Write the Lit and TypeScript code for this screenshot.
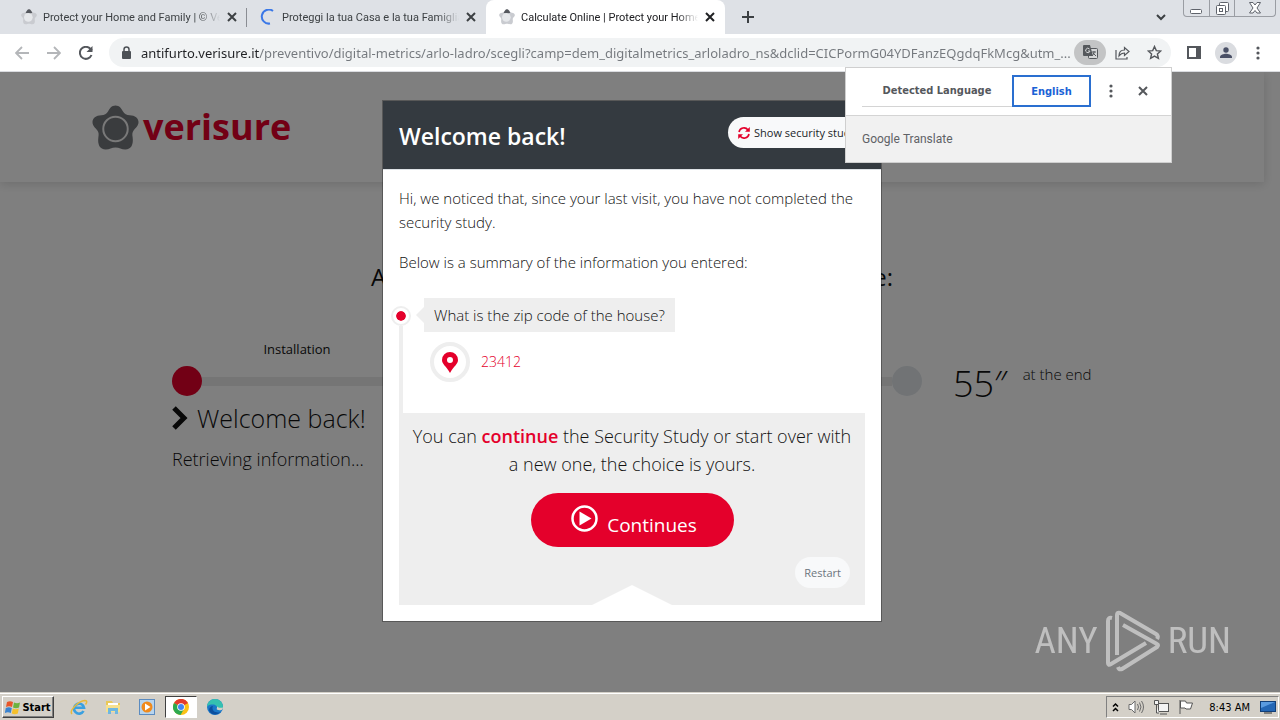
import { LitElement, html, css, svg } from "lit";
import { customElement } from "lit/decorators.js";

const closeIcon = html`<svg width="12" height="12" viewBox="0 0 12 12" fill="none" stroke="currentColor" stroke-width="2"><path d="M2 2l8 8M10 2l-8 8" /></svg>`;
const dotsIcon = html`<svg width="4" height="16" viewBox="0 0 4 16" fill="currentColor"><circle cx="2" cy="3" r="1.6" /><circle cx="2" cy="8" r="1.6" /><circle cx="2" cy="13" r="1.6" /></svg>`;
const starShape = svg`<path d="M24 1c-4 0-6 3-7.500 6-1.500 3-4 4-7 4C4 11 .5 14 .5 18c0 4 3 6 5 8.500 1.500 2 1.500 4 1 7C5.500 41 8 46 14 46c4 0 6-2 10-2s6 2 10 2c6 0 8.500-5 7.500-12.500-.5-3-.5-5 1-7 2-2.500 5-4.500 5-8.500 0-4-3.500-7-9-7-3 0-5.500-1-7-4C30 4 28 1 24 1z" />`;
const favicon = html`<svg width="16" height="16" viewBox="0 0 48 48">
  <g fill="#c9cbd0">${starShape}</g><path d="M14 11c3-4 5-10 10-10s7 6 10 10l-10 3z" fill="#55585e" /><circle cx="22" cy="25" r="13" fill="#e6e8eb" /></svg>`;

@customElement("browser-chrome")
export class BrowserChrome extends LitElement {
  static styles = css`
    :host { display: block; font-family: Roboto, "Liberation Sans", sans-serif; color: #3c4043; }
    svg { display: block; flex: none; }
    button { border: 0; background: none; padding: 0; margin: 0; color: inherit; font: inherit; display: flex; align-items: center; justify-content: center; flex: none; }
    .strip { display: flex; height: 34px; background: #dee1e6; padding-left: 8px; }
    .tab { flex: 0 1 239px; min-width: 0; box-sizing: border-box; display: flex; align-items: center; gap: 6px; padding: 0 9px 0 13px; font-size: 11px; position: relative; }
    .tab.active { background: #fff; border-radius: 8px 8px 0 0; color: #202124; }
    .tab.divided::after { content: ""; position: absolute; right: 0; top: 8px; width: 1px; height: 19px; background: #8a8d93; }
    .title { flex: 1; min-width: 0; white-space: nowrap; overflow: hidden; -webkit-mask-image: linear-gradient(90deg, #000 88%, transparent); mask-image: linear-gradient(90deg, #000 88%, transparent); }
    .close { width: 12px; height: 16px; }
    .plus { width: 46px; color: #3c4043; }
    .fill { flex: 1; }
    .search { width: 44px; }
    .window { display: flex; height: 17px; margin-right: 4px; border: 1px solid #9a9da3; border-top: 0; border-radius: 0 0 4px 4px; box-sizing: border-box; color: #5f636b; }
    .window button { width: 25px; height: 16px; }
    .window button + button { border-left: 1px solid #9a9da3; }
    .window button:last-child { width: 41px; }
    .bar { display: flex; align-items: center; height: 37px; padding: 0 6px; background: #fff; border-bottom: 1px solid #dadce0; }
    .tool { width: 32px; height: 28px; color: #54575c; }
    .tool.off { color: #b4b6b9; }
    .omni { flex: 1; min-width: 0; display: flex; align-items: center; height: 29px; margin: 0 7px; padding: 0 1px 0 9px; border-radius: 15px; background: #f1f3f4; }
    .url { flex: 1; min-width: 0; margin: 0 0 0 7px; padding: 0; border: 0; outline: 0; height: 24px; font: 13px "Noto Sans", "Open Sans", sans-serif; color: #5f6368; background: linear-gradient(90deg, #202124 118px, #74787d 118px); -webkit-background-clip: text; background-clip: text; -webkit-text-fill-color: transparent; }
    .translate { width: 32px; height: 25px; border-radius: 13px; background: #c3c4c5; color: #55585c; }
    .avatar { width: 22px; height: 22px; border-radius: 50%; background: #dadce0; display: flex; align-items: center; justify-content: center; }
  `;
  render() {
    return html`
      <div class="strip">
        <div class="tab divided">${favicon}<span class="title">Protect your Home and Family | © Verisure</span><button class="close" aria-label="Close tab">${closeIcon}</button></div>
        <div class="tab">
          <svg width="16" height="16" viewBox="0 0 16 16" fill="none" stroke="#3b78e7" stroke-width="2"><path d="M13 2A7 7 0 1 0 10 14.500" /></svg>
          <span class="title">Proteggi la tua Casa e la tua Famiglia</span><button class="close" aria-label="Close tab">${closeIcon}</button>
        </div>
        <div class="tab active">${favicon}<span class="title">Calculate Online | Protect your Home</span><button class="close" aria-label="Close tab">${closeIcon}</button></div>
        <button class="plus" aria-label="New tab"><svg width="12" height="12" viewBox="0 0 12 12" stroke="currentColor" stroke-width="2"><path d="M6 0v12M0 6h12" /></svg></button>
        <div class="fill"></div>
        <button class="search" aria-label="Search tabs"><svg width="10" height="7" viewBox="0 0 10 7" fill="none" stroke="currentColor" stroke-width="2"><path d="M1 1l4 4 4-4" /></svg></button>
        <div class="window">
          <button aria-label="Minimize"><svg width="13" height="13" viewBox="0 0 13 13" fill="#fff" stroke="currentColor"><rect x=".5" y="7.500" width="11" height="4" rx="1" /></svg></button>
          <button aria-label="Restore"><svg width="13" height="13" viewBox="0 0 13 13" fill="#fff" stroke="currentColor"><rect x="3.500" y=".5" width="9" height="9" rx="1" /><rect x=".5" y="3.500" width="9" height="9" rx="1" /><rect x="3.500" y="6.500" width="3" height="3" /></svg></button>
          <button aria-label="Close"><svg width="12" height="12" viewBox="0 0 12 12" fill="#fff" stroke="currentColor"><path d="M.5.500h3.500l2 2.500 2-2.500h3.500L8 6l3.500 5H8L6 8.500 4 11H.5L4 6z" /></svg></button>
        </div>
      </div>
      <div class="bar">
        <button class="tool off" aria-label="Back"><svg width="14" height="14" viewBox="0 0 14 14" fill="none" stroke="currentColor" stroke-width="1.800"><path d="M14 7H1.500M7 1L1 7l6 6" /></svg></button>
        <button class="tool off" aria-label="Forward"><svg width="14" height="14" viewBox="0 0 14 14" fill="none" stroke="currentColor" stroke-width="1.800"><path d="M0 7h12.500M7 1l6 6-6 6" /></svg></button>
        <button class="tool" aria-label="Reload"><svg width="14" height="14" viewBox="0 0 14 14" fill="none" stroke="currentColor" stroke-width="2"><path d="M12.500 9A6 6 0 1 1 11.500 3L13 4.500" /><path d="M13.500 0v6H7.500z" fill="currentColor" stroke="none" /></svg></button>
        <div class="omni">
          <svg width="16" height="16" viewBox="0 0 16 16"><rect x="4" y="6" width="9" height="8" rx="1" fill="#4d5156" /><path d="M6 6V4.500a2.500 2.500 0 0 1 5 0V6" fill="none" stroke="#4d5156" stroke-width="1.500" /></svg>
          <input class="url" aria-label="Address" spellcheck="false" .value=${"antifurto.verisure.it/preventivo/digital-metrics/arlo-ladro/scegli?camp=dem_digitalmetrics_arloladro_ns&dclid=CICPormG04YDFanzEQgdqFkMcg&utm_..."} />
          <button class="translate" aria-label="Translate this page"><svg width="15" height="15" viewBox="0 0 15 15"><rect x="5.500" y="3.500" width="9" height="10" rx="1" fill="#d5d6d7" stroke="currentColor" /><path d="M1 0h6l3 11H1a1 1 0 0 1-1-1V1a1 1 0 0 1 1-1z" fill="currentColor" /><path d="M6.500 4A2.200 2.200 0 1 0 7 6H5" fill="none" stroke="#d5d6d7" /><path d="M9 7h4M11 6v1c0 2-1 3-2 4M10 8l3 3" fill="none" stroke="currentColor" /></svg></button>
          <button class="tool" aria-label="Share"><svg width="15" height="14" viewBox="0 0 15 14" fill="none" stroke="currentColor" stroke-width="1.200"><path d="M1 4v9h11v-2" /><path d="M4 10c0-4 2-6 5.500-6V1.500L14 5.500l-4.500 4V7C7 7 5.500 8 4 10z" /></svg></button>
          <button class="tool" aria-label="Bookmark"><svg width="15" height="15" viewBox="0 0 15 15" fill="none" stroke="currentColor" stroke-width="1.400"><path d="M7.500 1.500l1.800 4.100 4.500.4-3.400 3 1 4.400-3.900-2.300-3.900 2.300 1-4.400-3.400-3 4.500-.4z" /></svg></button>
        </div>
        <button class="tool" aria-label="Side panel"><svg width="14" height="13" viewBox="0 0 14 13"><rect x="1" y="1" width="12" height="11" fill="none" stroke="currentColor" stroke-width="2" /><path d="M9 0h5v13H9z" fill="currentColor" /></svg></button>
        <button class="tool" aria-label="Profile"><span class="avatar"><svg width="12" height="12" viewBox="0 0 12 12" fill="#4a5066"><circle cx="6" cy="3" r="2.700" /><path d="M0 11V10c0-2.500 4-3.300 6-3.300s6 .8 6 3.300v1z" /></svg></span></button>
        <button class="tool" aria-label="Menu">${dotsIcon}</button>
      </div>`;
  }
}

@customElement("translate-popup")
export class TranslatePopup extends LitElement {
  static styles = css`
    :host { display: block; box-sizing: border-box; width: 327px; border: 1px solid #cfcfcf; background: #fff; font: 11px "DejaVu Sans Condensed", "DejaVu Sans", sans-serif; }
    button { font: inherit; border: 0; background: none; padding: 0; color: #55585c; display: flex; align-items: center; justify-content: center; }
    .row { display: flex; padding: 7px 12px 8px 16px; border-bottom: 1px solid #d4d4d4; }
    .lang { flex: 1; height: 32px; font-weight: 700; border-bottom: 1px solid #d4d4d4; }
    .lang.on { flex: 0 0 79px; margin-right: 4px; border: 2px solid #2a6fd0; color: #1a62d6; }
    .icon { width: 32px; height: 32px; }
    .brand { background: #f1f1f1; height: 46px; padding: 0 16px; display: flex; align-items: center; gap: 3px; color: #5f6266; font: 12px Roboto, sans-serif; }
  `;
  render() {
    return html`
      <div class="row">
        <button class="lang">Detected Language</button>
        <button class="lang on">English</button>
        <button class="icon" aria-label="Options">${dotsIcon}</button>
        <button class="icon" aria-label="Close">${closeIcon}</button>
      </div>
      <div class="brand"><span>Google</span><span>Translate</span></div>`;
  }
}

@customElement("security-page")
export class SecurityPage extends LitElement {
  static styles = css`
    :host { display: block; background: #fff; padding-right: 16px; color: #111; font: 300 15px/24px "Open Sans", "Noto Sans", sans-serif; overflow: hidden; }
    svg { display: block; flex: none; }
    h1, h2, p { margin: 0; font-weight: 300; }
    .top { display: flex; align-items: center; gap: 4px; height: 110px; padding: 0 92px; box-shadow: 0 2px 10px rgba(0, 0, 0, 0.15); }
    .name { font-size: 36px; line-height: 44px; font-weight: 700; color: #e4002b; }
    .headline { margin: 79px 0 0; text-align: center; font-size: 24px; line-height: 32px; font-weight: 500; white-space: nowrap; }
    .study { display: grid; grid-template-columns: minmax(0, 750px) auto; column-gap: 31px; max-width: 920px; margin: 46px auto 0; }
    .labels { display: grid; grid-template-columns: repeat(3, 1fr); text-align: center; font-size: 13px; line-height: 20px; font-weight: 400; }
    .track { display: flex; align-items: center; margin: 7px 0 4px; }
    .line { flex: 1; height: 9px; background: #ebebeb; }
    .stop { width: 30px; height: 30px; border-radius: 50%; background: #e2e7eb; }
    .stop.on { background: #e4002b; }
    .step { display: flex; align-items: center; gap: 9px; font-size: 25px; line-height: 36px; }
    .state { font-size: 18px; line-height: 28px; margin-top: 9px; }
    .eta { display: flex; gap: 15px; padding-top: 23px; }
    .secs { font-size: 36px; line-height: 44px; }
  `;
  render() {
    return html`
      <header class="top">
        <svg width="47" height="47" viewBox="0 0 48 47"><g fill="#75787c">${starShape}</g><circle cx="24" cy="25" r="12.500" fill="none" stroke="#f2f2f2" stroke-width="2" /></svg>
        <span class="name">verisure</span>
      </header>
      <h2 class="headline">Answer a few questions to get your free quote:</h2>
      <section class="study">
        <div>
          <div class="labels"><span>Installation</span></div>
          <div class="track"><span class="stop on"></span><span class="line"></span><span class="stop"></span></div>
          <h1 class="step"><svg width="16" height="24" viewBox="0 0 16 24" fill="none" stroke="#111" stroke-width="5"><path d="M2 2l10 10L2 22" /></svg>Welcome back!</h1>
          <p class="state">Retrieving information...</p>
        </div>
        <div class="eta"><span class="secs">55″</span><span>at the end</span></div>
      </section>`;
  }
}

@customElement("welcome-modal")
export class WelcomeModal extends LitElement {
  static styles = css`
    :host { display: block; box-sizing: border-box; width: 100%; max-width: 500px; border: 1px solid rgba(0, 0, 0, 0.3); background: #fff; background-clip: padding-box; color: #111; font: 300 15px/24px "Open Sans", "Noto Sans", sans-serif; }
    svg { display: block; flex: none; }
    h2, p { margin: 0; }
    button { border: 0; margin: 0; font-family: inherit; display: flex; align-items: center; justify-content: center; }
    header { display: flex; justify-content: space-between; align-items: flex-start; padding: 16px 16px 0; height: 52px; background: #343a40; color: #fff; border-bottom: 1px solid #dee2e6; }
    h2 { font-size: 23px; line-height: 38px; font-weight: 600; }
    .pill { height: 31px; padding: 0 9px 0 10px; border-radius: 16px; background: #f8f9fa; font-size: 11px; gap: 4px; color: #212529; white-space: nowrap; }
    .body { padding: 16px; }
    p + p { margin-top: 16px; }
    .timeline { position: relative; margin-top: 24px; padding: 0 0 31px 25px; }
    .timeline::before { content: ""; position: absolute; left: 0; top: 28px; bottom: 0; width: 4px; background: #eee; }
    .dot { position: absolute; left: -6px; top: 10px; width: 10px; height: 10px; border-radius: 50%; background: #e4002b; background-clip: padding-box; border: 3px solid #fff; outline: 2px solid #eee; box-shadow: inset 0 0 0 0 #fff; }
    .question { position: relative; width: max-content; margin-bottom: 10px; padding: 5px 10px; background: #eee; }
    .question::before { content: ""; position: absolute; left: -8px; top: 9px; border: 8px solid transparent; border-left: 0; border-right-color: #eee; }
    .answer { display: flex; align-items: center; gap: 11px; margin-left: 6px; color: #e4002b; font-size: 14px; }
    .pin { box-sizing: border-box; width: 40px; height: 40px; border: 4px solid #eee; border-radius: 50%; display: flex; align-items: center; justify-content: center; }
    .choice { position: relative; background: #eee; padding: 9px 10px 17px; }
    .choice::after { content: ""; position: absolute; bottom: 0; left: 50%; margin-left: -40px; border: 40px solid transparent; border-top: 0; border-bottom: 20px solid #fff; }
    .choice p { font-size: 18px; line-height: 28px; text-align: center; }
    .choice strong { font-weight: 600; color: #e4002b; }
    .go { width: 203px; height: 54px; margin: 15px auto 10px; border-radius: 27px; background: #e4002b; color: #fff; font-size: 19px; line-height: 28px; padding: 4px 0 0 4px; }
    .go span { display: flex; align-items: baseline; gap: 9px; }
    .again { height: 31px; margin: 0 5px 0 auto; padding: 0 9px; border-radius: 16px; background: #f8f9fa; color: #6c757d; font-size: 11px; }
  `;
  render() {
    return html`
      <header>
        <h2>Welcome back!</h2>
        <button class="pill"><svg width="12" height="12" viewBox="0 0 12 12" fill="none" stroke="#e4002b" stroke-width="1.600"><path d="M1 5a5 5 0 0 1 9-2M11 7a5 5 0 0 1-9 2" /><path d="M11.800 0v4.800H7zM.2 12V7.200H5z" fill="#e4002b" stroke="none" /></svg>Show security study</button>
      </header>
      <div class="body">
        <p>Hi, we noticed that, since your last visit, you have not completed the security study.</p>
        <p>Below is a summary of the information you entered:</p>
        <div class="timeline">
          <span class="dot"></span>
          <div class="question">What is the zip code of the house?</div>
          <div class="answer"><span class="pin"><svg width="16" height="21" viewBox="0 0 16 21"><path fill-rule="evenodd" d="M8 0a8 8 0 0 0-8 8c0 4 4 6 8 13 4-7 8-9 8-13a8 8 0 0 0-8-8zm0 5a3 3 0 1 1 0 6 3 3 0 0 1 0-6z" fill="#e4002b" /></svg></span>23412</div>
        </div>
        <div class="choice">
          <p>You can <strong>continue</strong> the Security Study or start over with a new one, the choice is yours.</p>
          <button class="go"><span><svg width="27" height="27" viewBox="0 0 27 27"><circle cx="13.500" cy="13.500" r="12" fill="none" stroke="#fff" stroke-width="2.500" /><path d="M8.500 6.500v14l12-7z" fill="#fff" /></svg>Continues</span></button>
          <button class="again">Restart</button>
        </div>
      </div>`;
  }
}

@customElement("task-bar")
export class TaskBar extends LitElement {
  static styles = css`
    :host { display: flex; align-items: center; box-sizing: border-box; height: 28px; padding: 2px 1px 0 2px; background: #d4d0c8; box-shadow: inset 0 1px #d4d0c8, inset 0 2px #fff; font: 11px "DejaVu Sans Condensed", sans-serif; color: #000; }
    svg { display: block; flex: none; }
    button { border: 0; padding: 0; margin: 0; background: none; font: inherit; display: flex; align-items: center; justify-content: center; }
    .start { width: 52px; height: 22px; gap: 1px; font-weight: 700; border: 1px solid; border-color: #fff #404040 #404040 #fff; box-shadow: inset -1px -1px #808080; background: #d4d0c8; }
    .apps { display: flex; gap: 2px; margin-left: 9px; flex: 1; }
    .app { width: 32px; height: 22px; }
    .app.on { background: #fff; box-sizing: border-box; border: 1px solid; border-color: #404040 #fff #fff #404040; }
    .tray { display: flex; align-items: center; box-sizing: border-box; height: 22px; padding: 0 2px 0 5px; gap: 9px; border: 1px solid; border-color: #808080 #fff #fff #808080; }
    time { margin: 0 1px 0 6px; }
  `;
  render() {
    return html`
      <button class="start"><svg width="16" height="15" viewBox="0 0 16 15"><path d="M2 2c2-1 4-1 6 0L7 7C5 6 3 6 1 7z" fill="#e8562a" /><path d="M9 2.500c2 1 4 1 6 0l-1 5c-2 1-4 1-6 0z" fill="#6cb33e" /><path d="M.8 8c2-1 4-1 6 0l-1 5c-2-1-4-1-6 0z" fill="#3a83d0" /><path d="M7.800 8.500c2 1 4 1 6 0l-1 5c-2 1-4 1-6 0z" fill="#f5c02c" /></svg>Start</button>
      <div class="apps">
        <button class="app" aria-label="Internet Explorer"><svg width="18" height="17" viewBox="0 0 18 17" fill="none"><path d="M13.500 12A5 5 0 1 1 14 8.800H5" stroke="#3aa0e0" stroke-width="2.600" /><path d="M2 15C-1 12 8 2 15 1.500c2.500 0 2 2 .5 4" stroke="#e8b93a" stroke-width="1.500" /></svg></button>
        <button class="app" aria-label="Explorer"><svg width="16" height="16" viewBox="0 0 16 16"><path d="M1 2h6l1 2h7v9H1z" fill="#e9c858" /><path d="M3 4h10v4H3z" fill="#fff" /><path d="M1 6h14v7H1z" fill="#f6e08e" /><path d="M3 15V9h10v6h-3v-3H6v3z" fill="#6fb7e0" /></svg></button>
        <button class="app" aria-label="Media Player"><svg width="16" height="16" viewBox="0 0 16 16"><rect x=".5" y=".5" width="15" height="15" fill="#b7d4ee" stroke="#5b8bc0" /><circle cx="8" cy="8" r="5.500" fill="#f08a1c" /><path d="M6 4.500v7L11.500 8z" fill="#fff" /></svg></button>
        <button class="app on" aria-label="Chrome"><svg width="16" height="16" viewBox="0 0 16 16"><circle cx="8" cy="8" r="8" fill="#fbc116" /><path d="M8 8L1 4a8 8 0 0 1 14 0z" fill="#e33b2e" /><path d="M8 8L1 4a8 8 0 0 0 6.500 12l3.500-6z" fill="#2da94f" /><circle cx="8" cy="8" r="3.800" fill="#fff" /><circle cx="8" cy="8" r="3" fill="#4285f4" /></svg></button>
        <button class="app" aria-label="Edge"><svg width="16" height="16" viewBox="0 0 16 16"><circle cx="8" cy="8" r="8" fill="#1b78c8" /><path d="M0 8a8 8 0 0 1 16 0c0 3-4 4-6 2.500C11 8 9 5.500 6 5.500S1 6 0 8z" fill="#35c1b0" /><path d="M6 7c-2 4 2 8 8 6-4 4-11 3-12-2 0-2 2-4 4-4z" fill="#0c4f9e" /><path d="M10 10.500c-1-.5.5-1 0-3 2 2 4 1 6 1 0 3-4 3.500-6 2z" fill="#d4d0c8" /></svg></button>
      </div>
      <div class="tray">
        <svg width="7" height="10" viewBox="0 0 7 10" fill="none" stroke="#000" stroke-width="1.500"><path d="M1 4.500L3.500 2 6 4.500M1 9l2.500-2.500L6 9" /></svg>
        <svg width="16" height="16" viewBox="0 0 16 16" fill="#fff" stroke="#6b6b6b"><path d="M1 5.500h2.500L7 2v12l-3.500-3.500H1z" /><path d="M9.500 5q2 3 0 6M11.500 3.500q3 4.500 0 9M13.500 2q4 6 0 12" fill="none" /></svg>
        <svg width="16" height="16" viewBox="0 0 16 16" fill="#f4f4f4" stroke="#555"><rect x="5.500" y="4.500" width="10" height="8" /><path d="M7 15h7M1.500 1.500h4v4h-4zM3.500 5.500V14H6" /></svg>
        <svg width="16" height="16" viewBox="0 0 16 16" fill="#fff" stroke="#555"><path d="M2 1v14" /><path d="M2.500 2h5l1 2h6l-2 6H8L7 9H2.500z" /></svg>
        <time>8:43 AM</time>
        <svg width="16" height="14" viewBox="0 0 16 14"><rect x=".5" y="1.500" width="15" height="10" fill="#2467b5" stroke="#123f78" /><path d="M1 2h14L1 8z" fill="#5a9be0" /><path d="M4 13h8" stroke="#333" /></svg>
      </div>`;
  }
}

@customElement("app-root")
export class AppRoot extends LitElement {
  static styles = css`
    :host { display: flex; flex-direction: column; min-height: 100vh; }
    .view { flex: 1; position: relative; display: flex; flex-direction: column; }
    security-page { flex: 1; }
    .backdrop { position: absolute; inset: 0; box-sizing: border-box; display: flex; justify-content: center; align-items: flex-start; padding: 28px 16px 28px 0; background: rgba(0, 0, 0, 0.5); }
    .popup { position: absolute; top: -5px; right: 108px; }
    .mark { position: absolute; right: 49px; bottom: 20px; display: flex; align-items: center; gap: 8px; color: #fff; opacity: 0.5; font: 400 37px/60px "Roboto Condensed", Roboto, sans-serif; }
  `;
  render() {
    return html`
      <browser-chrome></browser-chrome>
      <main class="view">
        <security-page></security-page>
        <div class="backdrop"><welcome-modal></welcome-modal></div>
        <translate-popup class="popup"></translate-popup>
        <div class="mark"><span>ANY</span><svg width="54" height="62" viewBox="0 0 54 62" fill="none" stroke="#fff" stroke-width="4" stroke-linejoin="round"><path d="M6 8Q2 7 2 11v42q0 3 3 1L40 33" /><path d="M11 45V5q0-3 3-2l36 21q3 2 1 5M17 15l34 19q2 1 0 3L16 59q-3 1-4-2" /></svg><span>RUN</span></div>
      </main>
      <task-bar></task-bar>`;
  }
}
